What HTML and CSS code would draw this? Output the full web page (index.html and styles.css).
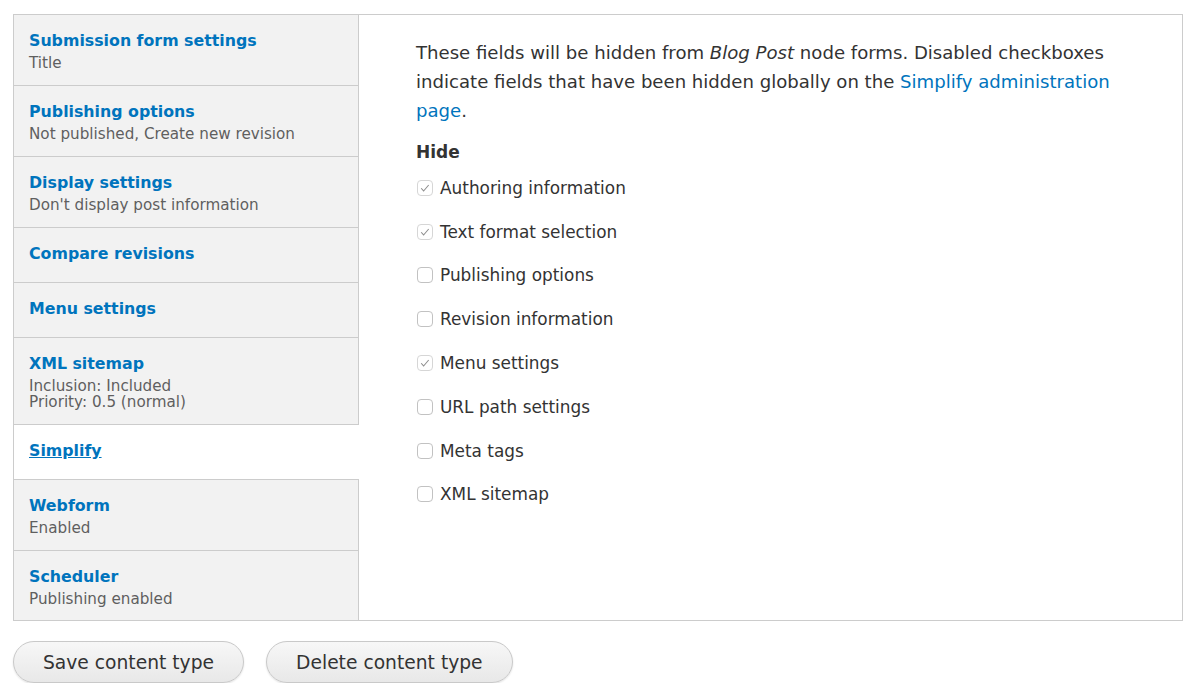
FILE: index.html
```html
<!DOCTYPE html>
<html lang="en">
<head>
    <meta charset="UTF-8">
    <title>Simplify</title>
    <link rel="stylesheet" href="styles.css">
</head>
<body>

<div class="vertical-tabs">
    <!-- Tab list -->
    <ul class="tabs-list">
        <li class="tab">
            <a href="#">Submission form settings</a>
            <span class="summary">Title</span>
        </li>
        <li class="tab">
            <a href="#">Publishing options</a>
            <span class="summary">Not published, Create new revision</span>
        </li>
        <li class="tab">
            <a href="#">Display settings</a>
            <span class="summary">Don't display post information</span>
        </li>
        <li class="tab">
            <a href="#">Compare revisions</a>
        </li>
        <li class="tab">
            <a href="#">Menu settings</a>
        </li>
        <li class="tab">
            <a href="#">XML sitemap</a>
            <span class="summary">Inclusion: Included<br>Priority: 0.5 (normal)</span>
        </li>
        <li class="tab selected">
            <a href="#">Simplify</a>
        </li>
        <li class="tab">
            <a href="#">Webform</a>
            <span class="summary">Enabled</span>
        </li>
        <li class="tab">
            <a href="#">Scheduler</a>
            <span class="summary">Publishing enabled</span>
        </li>
    </ul>

    <!-- Simplify pane -->
    <div class="tab-pane">
        <p class="description">These fields will be hidden from <em>Blog Post</em> node forms. Disabled checkboxes indicate fields that have been hidden globally on the <a href="#">Simplify administration page</a>.</p>

        <h4>Hide</h4>
        <div class="checkboxes">
            <label class="option disabled"><span class="box"><svg viewBox="0 0 16 16"><path d="M3.6 8.3l2.8 3.1 5.8-6.8" /></svg></span>Authoring information</label>
            <label class="option disabled"><span class="box"><svg viewBox="0 0 16 16"><path d="M3.6 8.3l2.8 3.1 5.8-6.8" /></svg></span>Text format selection</label>
            <label class="option"><span class="box"></span>Publishing options</label>
            <label class="option"><span class="box"></span>Revision information</label>
            <label class="option disabled"><span class="box"><svg viewBox="0 0 16 16"><path d="M3.6 8.3l2.8 3.1 5.8-6.8" /></svg></span>Menu settings</label>
            <label class="option"><span class="box"></span>URL path settings</label>
            <label class="option"><span class="box"></span>Meta tags</label>
            <label class="option"><span class="box"></span>XML sitemap</label>
        </div>
    </div>
</div>

<div class="form-actions">
    <button>Save content type</button>
    <button>Delete content type</button>
</div>

</body>
</html>
```

FILE: styles.css
```css
body {
    font-family: "DejaVu Sans", Verdana, sans-serif;
    margin: 0;
    padding: 14px 17px 0 13px;
    background-color: #fff;
    color: #333;
}

a {
    color: #0074bd;
    text-decoration: none;
}

/* Vertical tabs wrapper */
.vertical-tabs {
    display: flex;
    border: 1px solid #ccc;
    height: 607px;
    box-sizing: border-box;
}

.tabs-list {
    list-style: none;
    margin: 0;
    padding: 0;
    width: 344px;
    flex-shrink: 0;
    background-color: #f2f2f2;
    border-right: 1px solid #ccc;
}

.tab {
    padding: 15px 15px 14.5px;
    border-bottom: 1px solid #ccc;
}

.tab:last-child {
    border-bottom: none;
}

.tab a {
    display: block;
    font-size: 15.8px;
    font-weight: bold;
    line-height: 22px;
    margin-bottom: 2.5px;
}

.tab .summary {
    display: block;
    font-size: 15.2px;
    line-height: 16px;
    color: #5f5f5f;
}

.tab.selected {
    background-color: #fff;
    margin-right: -1px;
    position: relative;
}

.tab.selected a {
    text-decoration: underline;
}

/* Panel */
.tab-pane {
    flex: 1;
    padding: 23px 60px 0 57px;
}

.description {
    margin: 0;
    font-size: 18.1px;
    line-height: 29px;
}

.tab-pane h4 {
    margin: 15px 0 2px;
    font-size: 17px;
    line-height: 24px;
}

.option {
    display: flex;
    align-items: center;
    height: 43.8px;
    font-size: 16.9px;
}

.box {
    width: 16px;
    height: 16px;
    box-sizing: border-box;
    border: 1px solid #c2c2c2;
    border-radius: 4px;
    margin: 0 7px 0 1px;
    background-color: #fff;
}

.box svg {
    display: block;
    width: 14px;
    height: 14px;
    fill: none;
    stroke: #8e8e8e;
    stroke-width: 1.2;
}

.option.disabled .box {
    border-color: #d6d6d6;
}

/* Buttons */
.form-actions {
    display: flex;
    gap: 22px;
    margin-top: 20px;
}

.form-actions button {
    font-family: inherit;
    font-size: 18.7px;
    color: #333;
    height: 42px;
    padding: 0 29px;
    border: 1px solid #c9c9c9;
    border-radius: 21px;
    background: linear-gradient(#f7f7f7, #e8e8e8);
    box-shadow: 0 1px 2px rgba(0, 0, 0, 0.12);
    cursor: pointer;
}
```
